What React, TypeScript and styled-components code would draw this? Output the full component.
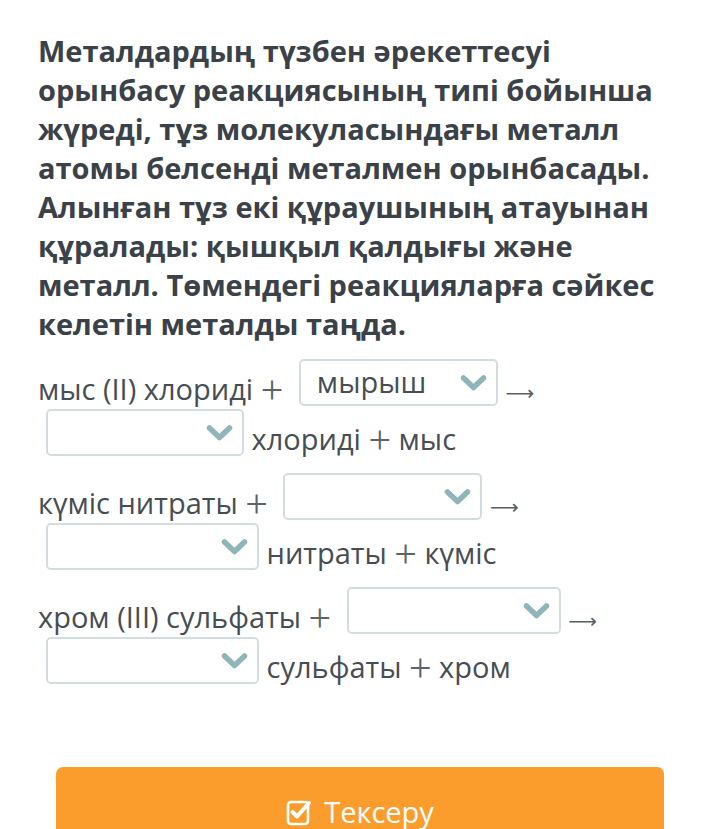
import React from "react"
import styled, { createGlobalStyle } from "styled-components"

/*==================== Global ====================*/

const GlobalStyle = createGlobalStyle`
    html, body {
        margin: 0;
        padding: 0;
        background: #ffffff;
    }

    body {
        font-family: "Open Sans", "Noto Sans", sans-serif;
        overflow: hidden;
    }
`

/*==================== Data ====================*/

const questionLines = [
    "Металдардың түзбен әрекеттесуі",
    "орынбасу реакциясының типі бойынша",
    "жүреді, тұз молекуласындағы металл",
    "атомы белсенді металмен орынбасады.",
    "Алынған тұз екі құраушының атауынан",
    "құралады: қышқыл қалдығы және",
    "металл. Төмендегі реакцияларға сәйкес",
    "келетін металды таңда.",
]

const reactions = [
    { before: "мыс (II) хлориді", first: "мырыш", firstWidth: 199, secondWidth: 198, after: "хлориді", product: "мыс" },
    { before: "күміс нитраты", first: "", firstWidth: 199, secondWidth: 213, after: "нитраты", product: "күміс" },
    { before: "хром (III) сульфаты", first: "", firstWidth: 214, secondWidth: 213, after: "сульфаты", product: "хром" },
]

/*==================== Components ====================*/

const Chevron = () => (
    <svg width="27" height="18" viewBox="0 0 27 18">
        <path d="M3.5 4 L13.5 13.5 L23.5 4" fill="none" stroke="#8fb4ba" strokeWidth="5.5" strokeLinecap="round" strokeLinejoin="round" />
    </svg>
)

const CheckSquare = () => (
    <svg width="26" height="32" viewBox="0 0 26 32">
        <rect x="2" y="7" width="20" height="22" rx="3" fill="none" stroke="#ffffff" strokeWidth="2.6" />
        <path d="M6.5 17 L11 21.5 L23 8" fill="none" stroke="#ffffff" strokeWidth="4" strokeLinecap="round" strokeLinejoin="round" />
    </svg>
)

const Dropdown = ({ value, width }: { value: string; width: number }) => (
    <Select $width={width}>
        <SelectInner>
            <SelectValue>{value}</SelectValue>
            <Chevron />
        </SelectInner>
    </Select>
)

const App = () => (
    <>
        <GlobalStyle />
        <Page>
            <Question>
                {questionLines.map((line, i) => (
                    <QuestionLine key={i}>{line}</QuestionLine>
                ))}
            </Question>

            {reactions.map(r => (
                <Reaction key={r.before}>
                    {r.before} <Plus>+</Plus> <Dropdown value={r.first} width={r.firstWidth} /> <Arrow>⟶</Arrow>{" "}
                    <Dropdown value="" width={r.secondWidth} /> {r.after} <Plus>+</Plus> {r.product}
                </Reaction>
            ))}

            <CheckButton>
                <CheckSquare />
                Тексеру
            </CheckButton>
        </Page>
    </>
)

export default App

/*==================== Styles ====================*/

const Page = styled.main`
    width: 704px;
    box-sizing: border-box;
    padding: 31px 38px 0 38px;
`

const Question = styled.p`
    margin: 0 0 16px 0;
    font-size: 29px;
    line-height: 39px;
    font-weight: 700;
    color: #3b4148;
`

const QuestionLine = styled.span`
    display: block;
    white-space: nowrap;
`

const Reaction = styled.p`
    margin: 0 0 14px 0;
    font-size: 29px;
    line-height: 41px;
    color: #474d54;
`

const Plus = styled.span`
    font-family: "Liberation Serif", "DejaVu Serif", serif;
    font-size: 40px;
    line-height: 0;
    color: #5d636a;
    vertical-align: -3px;
`

const Arrow = styled.span`
    font-family: "DejaVu Sans", sans-serif;
    font-size: 20px;
    line-height: 0;
    color: #5a6068;
`

const Select = styled.span<{ $width: number }>`
    display: inline-block;
    box-sizing: border-box;
    width: ${({ $width }) => $width}px;
    height: 47px;
    margin-left: 8px;
    border: 2px solid #d3dddf;
    border-radius: 5px;
    overflow: hidden;
    vertical-align: -6px;
`

const SelectInner = styled.span`
    display: flex;
    align-items: center;
    justify-content: space-between;
    height: 100%;
    padding: 0 9px 0 16px;
    line-height: 1;
`

const SelectValue = styled.span`
    font-size: 29px;
    color: #474d54;
    margin-top: -3px;
`

const CheckButton = styled.button`
    display: flex;
    align-items: center;
    justify-content: center;
    gap: 12px;
    width: 608px;
    height: 88px;
    margin: 80px 0 0 18px;
    padding: 0;
    border: none;
    border-radius: 7px;
    background: #fa9d2c;
    color: #ffffff;
    font-family: "Open Sans", "Noto Sans", sans-serif;
    font-size: 29px;
`
